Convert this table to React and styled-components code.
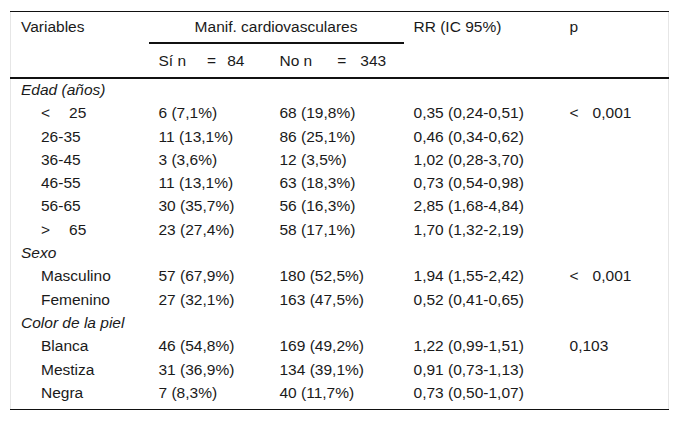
import React from "react";
import styled, { createGlobalStyle } from "styled-components";

const Global = createGlobalStyle`
  html, body { margin: 0; padding: 0; background: #fff; }
  body { font-family: "Liberation Sans", Arial, sans-serif; color: #1a1a1a; }
`;

const Page = styled.div`
  padding: 11px 11px 0 10px;
`;

const Table = styled.table`
  width: 658px;
  border-collapse: collapse;
  table-layout: fixed;
  font-size: 15.5px;
  border-left: 1px solid #e6e6e6;
  border-right: 1px solid #e6e6e6;
  border-bottom: 1.5px solid #111;
`;

const HeadCell = styled.th`
  font-weight: normal;
  text-align: ${(p) => (p.$center ? "center" : "left")};
  vertical-align: top;
  padding: 0 10px;
  height: ${(p) => p.$h}px;
  line-height: ${(p) => p.$lh}px;
  white-space: nowrap;
  border-bottom: ${(p) => p.$rule || "none"};
`;

const TopRow = styled.tr`
  border-top: 1.5px solid #111;
`;

const SubHeadRow = styled.tr`
  border-bottom: 2.5px solid #111;
`;

const Cell = styled.td`
  padding: 0 10px 2px ${(p) => (p.$indent ? 30 : 10)}px;
  height: 21.3px;
  line-height: 21.3px;
  white-space: nowrap;
  font-style: ${(p) => (p.$italic ? "italic" : "normal")};
`;

const LastRow = styled.tr`
  td { padding-bottom: 6px; }
`;

const Gap = styled.span`
  display: inline-block;
  width: ${(p) => p.$w}px;
`;

const rows = [
  { group: "Edad (años)" },
  { label: ["<", "25"], a: "6 (7,1%)", b: "68 (19,8%)", rr: "0,35 (0,24-0,51)", p: ["<", "0,001"] },
  { label: "26-35", a: "11 (13,1%)", b: "86 (25,1%)", rr: "0,46 (0,34-0,62)" },
  { label: "36-45", a: "3 (3,6%)", b: "12 (3,5%)", rr: "1,02 (0,28-3,70)" },
  { label: "46-55", a: "11 (13,1%)", b: "63 (18,3%)", rr: "0,73 (0,54-0,98)" },
  { label: "56-65", a: "30 (35,7%)", b: "56 (16,3%)", rr: "2,85 (1,68-4,84)" },
  { label: [">", "65"], a: "23 (27,4%)", b: "58 (17,1%)", rr: "1,70 (1,32-2,19)" },
  { group: "Sexo" },
  { label: "Masculino", a: "57 (67,9%)", b: "180 (52,5%)", rr: "1,94 (1,55-2,42)", p: ["<", "0,001"] },
  { label: "Femenino", a: "27 (32,1%)", b: "163 (47,5%)", rr: "0,52 (0,41-0,65)" },
  { group: "Color de la piel" },
  { label: "Blanca", a: "46 (54,8%)", b: "169 (49,2%)", rr: "1,22 (0,99-1,51)", p: "0,103" },
  { label: "Mestiza", a: "31 (36,9%)", b: "134 (39,1%)", rr: "0,91 (0,73-1,13)" },
  { label: "Negra", a: "7 (8,3%)", b: "40 (11,7%)", rr: "0,73 (0,50-1,07)" },
];

const Pair = ({ v, gap }) =>
  Array.isArray(v) ? (
    <>
      {v[0]}
      <Gap $w={gap} />
      {v[1]}
    </>
  ) : (
    v || ""
  );

export default function App() {
  return (
    <>
      <Global />
      <Page>
        <Table>
          <colgroup>
            <col style={{ width: 138 }} />
            <col style={{ width: 121 }} />
            <col style={{ width: 134 }} />
            <col style={{ width: 156 }} />
            <col style={{ width: 109 }} />
          </colgroup>
          <thead>
            <TopRow>
              <HeadCell $h={30} $lh={30}>Variables</HeadCell>
              <HeadCell colSpan={2} $center $h={30} $lh={30} $rule="2px solid #111">
                Manif. cardiovasculares
              </HeadCell>
              <HeadCell $h={30} $lh={30}>RR (IC 95%)</HeadCell>
              <HeadCell $h={30} $lh={30}>p</HeadCell>
            </TopRow>
            <SubHeadRow>
              <HeadCell $h={31} $lh={33} />
              <HeadCell $h={31} $lh={33}>
                Sí n<Gap $w={21} />=<Gap $w={11} />84
              </HeadCell>
              <HeadCell $h={31} $lh={33}>
                No n<Gap $w={25} />=<Gap $w={14} />343
              </HeadCell>
              <HeadCell $h={31} $lh={33} />
              <HeadCell $h={31} $lh={33} />
            </SubHeadRow>
          </thead>
          <tbody>
            {rows.map((r, i) => {
              const Row = i === rows.length - 1 ? LastRow : "tr";
              if (r.group) {
                return (
                  <Row key={i}>
                    <Cell $italic colSpan={5}>{r.group}</Cell>
                  </Row>
                );
              }
              return (
                <Row key={i}>
                  <Cell $indent>
                    <Pair v={r.label} gap={19} />
                  </Cell>
                  <Cell>{r.a}</Cell>
                  <Cell>{r.b}</Cell>
                  <Cell>{r.rr}</Cell>
                  <Cell>
                    <Pair v={r.p} gap={14} />
                  </Cell>
                </Row>
              );
            })}
          </tbody>
        </Table>
      </Page>
    </>
  );
}
